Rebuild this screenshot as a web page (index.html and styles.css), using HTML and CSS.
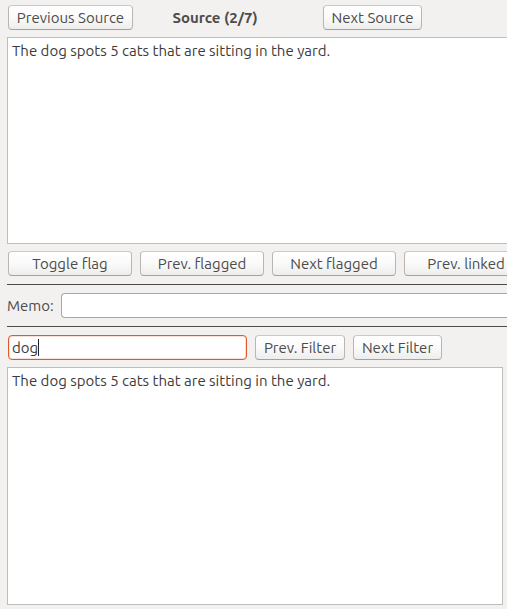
FILE: index.html
```html
<!DOCTYPE html>
<html lang="en">
<head>
<meta charset="utf-8">
<title>Source (2/7)</title>
<link rel="stylesheet" href="styles.css">
</head>
<body>
<main class="window">
  <header class="source-bar">
    <button type="button" class="source-prev">Previous Source</button>
    <h1 class="title">Source (2/7)</h1>
    <button type="button" class="source-next">Next Source</button>
  </header>
  <textarea class="text source-text" aria-label="Source text" spellcheck="false">The dog spots 5 cats that are sitting in the yard.</textarea>
  <div class="flag-bar">
    <button type="button">Toggle flag</button>
    <button type="button">Prev. flagged</button>
    <button type="button">Next flagged</button>
    <button type="button">Prev. linked</button>
  </div>
  <div class="memo-bar">
    <label for="memo">Memo:</label>
    <input id="memo" class="field memo" type="text">
  </div>
  <div class="filter-bar">
    <div class="filter-box">
      <input class="field filter" type="text" value="dog" aria-label="Filter" spellcheck="false">
      <span class="caret"></span>
    </div>
    <button type="button" class="filter-prev">Prev. Filter</button>
    <button type="button" class="filter-next">Next Filter</button>
  </div>
  <textarea class="text filter-text" aria-label="Filtered text" spellcheck="false">The dog spots 5 cats that are sitting in the yard.</textarea>
</main>
</body>
</html>
```
FILE: styles.css
```css
* {
  box-sizing: border-box;
}

body {
  margin: 0;
  background: #f2f1f0;
  color: #4c4c4c;
  font: 15px/20px Ubuntu, "Noto Sans", sans-serif;
}

button,
input,
textarea {
  margin: 0;
  font: inherit;
  color: inherit;
}

.window {
  display: flex;
  flex-direction: column;
  height: 100vh;
  padding: 5px 0 4px 7px;
  overflow: hidden;
}

button {
  flex: none;
  height: 25px;
  padding: 0;
  border: 1px solid #b9b6b2;
  border-color: #cbc9c6 #b9b6b2 #a5a29e;
  border-radius: 4px;
  background: linear-gradient(#ffffff, #fafafa 50%, #ededec);
  line-height: 23px;
  white-space: nowrap;
}

.source-bar {
  display: flex;
  align-items: center;
  padding-left: 1px;
}

.source-prev {
  width: 125px;
}

.title {
  width: 190px;
  margin: 0;
  padding-right: 26px;
  font-size: 15px;
  text-align: center;
}

.source-next {
  width: 99px;
}

.text {
  display: block;
  padding: 3px 4px;
  border: 1px solid #bfbdba;
  border-radius: 0;
  outline: none;
  background: #fff;
  color: #3c3c3c;
  resize: none;
}

.source-text {
  flex: 199 1 0;
  margin-top: 7px;
  border-right: 0;
}

.flag-bar {
  display: flex;
  gap: 8px;
  padding: 7px 0 8px 1px;
}

.flag-bar button {
  width: 124px;
}

.memo-bar {
  display: flex;
  align-items: center;
  gap: 7px;
  padding: 8px 0;
  border: solid #4c4c4c;
  border-width: 1px 0;
}

.field {
  height: 25px;
  padding: 0 3px;
  border: 1px solid #aaa7a3;
  border-radius: 4px;
  outline: none;
  background: #fff;
  color: #3c3c3c;
}

.memo {
  flex: 1;
  min-width: 0;
  border-right: 0;
  border-radius: 4px 0 0 4px;
}

.filter-bar {
  display: flex;
  gap: 8px;
  padding: 8px 0 7px 1px;
}

.filter-box {
  position: relative;
  width: 239px;
}

.filter {
  display: block;
  width: 100%;
  border-color: #dd5a2b;
  box-shadow: inset 0 0 0 1px #f9e0d7;
}

.caret {
  position: absolute;
  top: 4px;
  left: 30px;
  width: 1px;
  height: 17px;
  background: #222;
}

.filter-prev {
  width: 90px;
}

.filter-next {
  width: 89px;
}

.filter-text {
  flex: 230 1 0;
  margin-right: 4px;
}
```
